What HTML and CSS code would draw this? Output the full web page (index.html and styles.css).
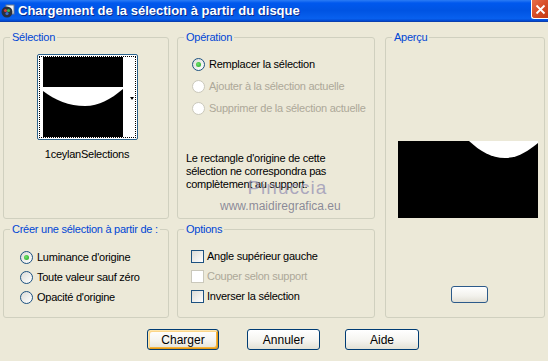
FILE: index.html
```html
<!DOCTYPE html>
<html lang="fr">
<head>
<meta charset="UTF-8">
<meta name="viewport" content="width=device-width, initial-scale=1.0">
<title>Chargement de la sélection à partir du disque</title>
<link rel="stylesheet" href="styles.css">
</head>
<body>

<div class="window">
    <div class="titlebar">
        <svg class="app-icon" width="14" height="14" viewBox="0 0 14 14">
            <rect x="5" y="1" width="8" height="9" fill="#f4f4f4" stroke="#6a7a90"/>
            <circle cx="6" cy="8" r="5.5" fill="#2a2f3a"/>
            <circle cx="4.5" cy="6.5" r="1.6" fill="#d23b3b"/>
            <circle cx="7.5" cy="6.5" r="1.6" fill="#38b24a"/>
            <circle cx="6" cy="9.5" r="1.6" fill="#3b6fd2"/>
        </svg>
        <span class="title-text">Chargement de la sélection à partir du disque</span>
        <div class="close-btn">
            <svg width="11" height="11" viewBox="0 0 11 11"><path d="M1.5 1.5 L9.5 9.5 M9.5 1.5 L1.5 9.5" stroke="#fff" stroke-width="1.8"/></svg>
        </div>
    </div>

    <div class="dialog">
        <div class="groups">
            <fieldset class="group group-selection">
                <legend>Sélection</legend>
                <div class="thumb-picker">
                    <div class="thumb-focus">
                        <svg class="thumb" width="80" height="80" viewBox="0 0 80 80">
                            <rect width="80" height="80" fill="#000"/>
                            <path d="M0 30 H80 V32 C68 42 56 49 42 49 C26 49 12 43 0 34 Z" fill="#fff"/>
                        </svg>
                        <span class="thumb-arrow"></span>
                    </div>
                </div>
                <div class="thumb-name">1ceylanSelections</div>
            </fieldset>

            <fieldset class="group group-operation">
                <legend>Opération</legend>
                <div class="choices">
                    <div class="choice"><span class="radio checked"></span>Remplacer la sélection</div>
                    <div class="choice disabled"><span class="radio"></span>Ajouter à la sélection actuelle</div>
                    <div class="choice disabled"><span class="radio"></span>Supprimer de la sélection actuelle</div>
                </div>
                <p class="note">Le rectangle d'origine de cette<br>sélection ne correspondra pas<br>complètement au support.</p>
                <div class="watermark">
                    <span class="wm-name">Pinuccia</span>
                    <span class="wm-site">www.maidiregrafica.eu</span>
                </div>
            </fieldset>

            <fieldset class="group group-preview">
                <legend>Aperçu</legend>
                <svg class="preview" width="140" height="77" viewBox="0 0 140 77">
                    <rect width="140" height="77" fill="#000"/>
                    <path d="M71 0 H140 V2 C130 10 120 17 107 17 C93 17 82 10 71 0 Z" fill="#fff"/>
                </svg>
                <div class="zoom-btn"></div>
            </fieldset>

            <fieldset class="group group-source">
                <legend>Créer une sélection à partir de :</legend>
                <div class="choices">
                    <div class="choice"><span class="radio checked"></span>Luminance d'origine</div>
                    <div class="choice"><span class="radio"></span>Toute valeur sauf zéro</div>
                    <div class="choice"><span class="radio"></span>Opacité d'origine</div>
                </div>
            </fieldset>

            <fieldset class="group group-options">
                <legend>Options</legend>
                <div class="choices">
                    <div class="choice"><span class="check"></span>Angle supérieur gauche</div>
                    <div class="choice disabled"><span class="check"></span>Couper selon support</div>
                    <div class="choice"><span class="check"></span>Inverser la sélection</div>
                </div>
            </fieldset>
        </div>

        <div class="buttons">
            <div class="btn btn-default">Charger</div>
            <div class="btn btn-cancel">Annuler</div>
            <div class="btn btn-help">Aide</div>
        </div>
    </div>
</div>

</body>
</html>
```

FILE: styles.css
```css
body {
    margin: 0;
    padding: 0;
    background-color: #ece9d8;
    font-family: "Liberation Sans", Arial, sans-serif;
    font-size: 11px;
    letter-spacing: -0.25px;
    color: #000;
}
.window {
    width: 548px;
    height: 361px;
    overflow: hidden;
    background-color: #ece9d8;
}

/* title bar */
.titlebar {
    height: 22px;
    display: flex;
    align-items: center;
    background: linear-gradient(#2b7cf5 0, #0058ee 3px, #0054e3 50%, #0860ee 88%, #0047cf 100%);
    border-bottom: 1px solid #0a3fb0;
    box-sizing: border-box;
}
.app-icon {
    margin-left: 1px;
    flex: none;
}
.title-text {
    margin-left: 3px;
    flex: 1;
    color: #fff;
    font-weight: bold;
    font-size: 13px;
    letter-spacing: 0;
    text-shadow: 1px 1px 0 #0a2a8a;
    white-space: nowrap;
}
.close-btn {
    flex: none;
    align-self: flex-start;
    width: 17px;
    height: 19px;
    box-sizing: border-box;
    border-left: 1px solid #fff;
    border-bottom: 1px solid #fff;
    border-bottom-left-radius: 3px;
    background: linear-gradient(135deg, #e8704c 0%, #d9502a 45%, #c23a14 100%);
    display: flex;
    align-items: center;
    justify-content: center;
}
.close-btn svg {
    display: block;
    margin-left: 1px;
}

/* dialog body */
.dialog {
    padding: 9px 0 0 3px;
}
.groups {
    display: grid;
    grid-template-columns: 166px 198px 162px;
    grid-template-rows: 188px 95px;
    column-gap: 8px;
    row-gap: 4px;
}
.group {
    margin: 0;
    padding: 0;
    min-width: 0;
    border: 1px solid #d0d0bf;
    border-radius: 3px;
    box-sizing: border-box;
}
.group legend {
    margin-left: 6px;
    padding: 0 2px;
    line-height: 13px;
    color: #0046d5;
    white-space: nowrap;
}
.group-selection { grid-column: 1; grid-row: 1; }
.group-operation { grid-column: 2; grid-row: 1; position: relative; }
.group-preview { grid-column: 3; grid-row: 1 / 3; margin-left: 2px; }
.group-source { grid-column: 1; grid-row: 2; }
.group-options { grid-column: 2; grid-row: 2; }

/* selection thumbnail */
.thumb-picker {
    width: 101px;
    height: 86px;
    margin: 10px 0 0 33px;
    box-sizing: border-box;
    border: 1px solid #2c628b;
    border-radius: 2px;
    padding: 1px;
    background-color: #fff;
}
.thumb-focus {
    height: 100%;
    box-sizing: border-box;
    border: 1px dotted #000;
    display: flex;
    align-items: center;
    padding-left: 3px;
}
.thumb {
    display: block;
    flex: none;
}
.thumb-arrow {
    margin-left: 7px;
    margin-top: 2px;
    border-left: 2px solid transparent;
    border-right: 2px solid transparent;
    border-top: 3px solid #000;
}
.thumb-name {
    margin-top: 8px;
    text-align: center;
    line-height: 13px;
    padding-left: 2px;
}

/* radio / checkbox rows */
.choices {
    display: flex;
    flex-direction: column;
}
.choice {
    display: flex;
    align-items: center;
    height: 20px;
    white-space: nowrap;
}
.choice.disabled {
    color: #aca899;
}
.radio {
    flex: none;
    width: 13px;
    height: 13px;
    box-sizing: border-box;
    border: 1px solid #1c5180;
    border-radius: 50%;
    background: linear-gradient(135deg, #dcdcd7, #fff);
    margin-right: 4px;
    display: flex;
    align-items: center;
    justify-content: center;
}
.radio.checked::after {
    content: "";
    width: 5px;
    height: 5px;
    border-radius: 50%;
    background: radial-gradient(circle at 40% 40%, #6fe36a, #21a121);
}
.choice.disabled .radio {
    border-color: #cac8bb;
    background: #fff;
}
.check {
    flex: none;
    width: 13px;
    height: 13px;
    box-sizing: border-box;
    border: 1px solid #1c5180;
    background: linear-gradient(135deg, #dcdcd7, #fff);
    margin-right: 3px;
}
.choice.disabled .check {
    border-color: #cac8bb;
    background: #fff;
}

.group-operation .choices {
    padding: 9px 0 0 14px;
}
.group-operation .choice {
    height: 22px;
}
.group-source .choices {
    padding: 11px 0 0 16px;
}
.group-options .choices {
    padding: 10px 0 0 13px;
}

.note {
    margin: 33px 0 0 8px;
    line-height: 13px;
}
.watermark {
    position: absolute;
    left: 42px;
    top: 133px;
    display: flex;
    flex-direction: column;
    align-items: center;
    pointer-events: none;
}
.wm-name {
    font-size: 19px;
    line-height: 22px;
    letter-spacing: 1px;
    color: rgba(150, 146, 180, 0.75);
    padding-left: 14px;
}
.wm-site {
    font-size: 12px;
    line-height: 14px;
    letter-spacing: 0;
    color: rgba(120, 120, 140, 0.85);
}

/* preview */
.preview {
    display: block;
    margin: 97px 0 0 12px;
}
.zoom-btn {
    width: 37px;
    height: 17px;
    margin: 68px 0 0 65px;
    box-sizing: border-box;
    border: 1px solid #2c5a8a;
    border-radius: 3px;
    background: linear-gradient(#fff, #f2f1ec 60%, #e2e0d6);
}

/* buttons */
.buttons {
    display: flex;
    margin-top: 11px;
    padding-left: 144px;
}
.btn {
    height: 21px;
    box-sizing: border-box;
    border: 1px solid #003c74;
    border-radius: 3px;
    background: linear-gradient(#fff, #f5f4f0 55%, #e3e1d5);
    display: flex;
    align-items: center;
    justify-content: center;
    font-size: 12px;
    letter-spacing: 0;
}
.btn-default {
    width: 72px;
    box-shadow: inset 1px 1px 0 #fde6ae, inset -1px -1px 0 #e59a16, inset 2px 2px 0 #fcd689, inset -2px -2px 0 #f4b43e;
}
.btn-cancel {
    width: 73px;
    margin-left: 28px;
}
.btn-help {
    width: 74px;
    margin-left: 25px;
}
```
